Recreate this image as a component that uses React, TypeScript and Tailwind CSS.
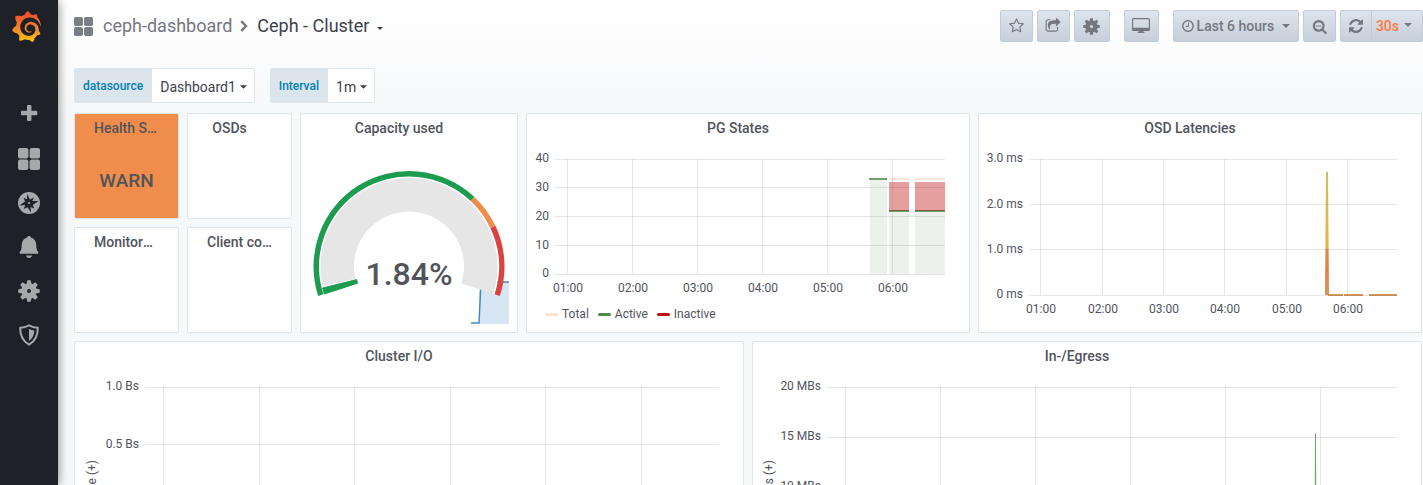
import React from 'react';
import { SiGrafana } from 'react-icons/si';

type IconProps = { className?: string };

/* ---------- icons ---------- */

function AppsIcon({ className }: IconProps) {
  return (
    <svg viewBox="0 0 22 22" className={className} fill="currentColor" aria-hidden="true">
      <rect x="0" y="0" width="10.4" height="10.4" rx="2" />
      <rect x="11.6" y="0" width="10.4" height="10.4" rx="2" />
      <rect x="0" y="11.6" width="10.4" height="10.4" rx="2" />
      <rect x="11.6" y="11.6" width="10.4" height="10.4" rx="2" />
    </svg>
  );
}

function PlusIcon({ className }: IconProps) {
  return (
    <svg viewBox="0 2 22 22" className={className} fill="currentColor" aria-hidden="true">
      <path d="M10 3h2.4a1 1 0 0 1 1 1v4.8h4.9a1 1 0 0 1 1 1v2.4a1 1 0 0 1-1 1h-4.9V18a1 1 0 0 1-1 1H10a1 1 0 0 1-1-1v-4.8H4a1 1 0 0 1-1-1V9.8a1 1 0 0 1 1-1h5V4a1 1 0 0 1 1-1z" />
    </svg>
  );
}

function CompassIcon({ className }: IconProps) {
  return (
    <svg viewBox="0 0 22 22" className={className} aria-hidden="true">
      <circle cx="11" cy="11" r="11" fill="currentColor" />
      <path
        fill="#1f2129"
        d="M9 2l2.900 5.400 4.100-2-1.700 3.700 6.300-.1-5.900 4 1.600 3.600-3.700-1.600.4 5.500-3.400-5.300-4 1.700 1.700-3.900-5.900.4 5.700-4-1.600-3.600 3.500 1.500z"
      />
      <circle cx="11" cy="11" r="1.1" fill="currentColor" />
    </svg>
  );
}

function BellIcon({ className }: IconProps) {
  return (
    <svg viewBox="0 0 22 22" className={className} fill="currentColor" aria-hidden="true">
      <path d="M11 0c1 0 1.700.6 1.900 1.500 3.300.9 5.100 3.500 5.300 7 .2 4 .5 5.800 2 7.600.5.700.1 1.700-.8 1.700H2.600c-.9 0-1.300-1-.8-1.700 1.500-1.800 1.800-3.600 2-7.600.2-3.500 2-6.100 5.300-7C9.300.6 10 0 11 0zM8 19.400h6c-.3 1.500-1.500 2.500-3 2.500s-2.700-1-3-2.500z" />
    </svg>
  );
}

function GearIcon({ className }: IconProps) {
  const teeth = [0, 45, 90, 135, 180, 225, 270, 315];
  return (
    <svg viewBox="0 0 22 22" className={className} fill="currentColor" aria-hidden="true">
      {teeth.map((a) => (
        <path key={a} d="M9.300 0.300h3.400l.9 4.500h-5.200z" transform={`rotate(${a} 11 11)`} />
      ))}
      <path
        fillRule="evenodd"
        d="M11 3.300a7.700 7.700 0 1 0 0 15.400a7.700 7.700 0 1 0 0-15.400zM11 9a2 2 0 1 1 0 4a2 2 0 1 1 0-4z"
      />
    </svg>
  );
}

function ShieldIcon({ className }: IconProps) {
  return (
    <svg viewBox="0 0 22 22" className={className} aria-hidden="true">
      <path
        d="M11 1.300c2.600 1.500 5.500 2.300 8.800 2.400.2 7.800-2.600 13.400-8.800 17-6.200-3.600-9-9.200-8.800-17 3.300-.1 6.200-.9 8.800-2.400z"
        fill="none"
        stroke="currentColor"
        strokeWidth="2"
        strokeLinejoin="round"
      />
      <path d="M11 5c1.700.9 3.500 1.400 5.300 1.600-.1 4.600-1.800 8-5.300 10.400z" fill="currentColor" />
    </svg>
  );
}

function StarIcon({ className }: IconProps) {
  return (
    <svg viewBox="0 0 1664 1792" className={className} fill="currentColor" aria-hidden="true">
      <path d="M1137 1004l306-297-422-62-189-382-189 382-422 62 306 297-73 421 378-199 377 199zm527-357q0 22-26 48l-363 354 86 500q1 7 1 20 0 50-41 50-19 0-40-12l-449-236-449 236q-22 12-40 12-21 0-31.500-14.500t-10.500-35.500q0-6 2-20l86-500-364-354q-25-27-25-48 0-37 56-46l502-73 225-455q19-41 49-41t49 41l225 455 502 73q56 9 56 46z" />
    </svg>
  );
}

function ShareIcon({ className }: IconProps) {
  return (
    <svg viewBox="0 0 1792 1792" className={className} fill="currentColor" aria-hidden="true">
      <path d="M1472 989v259q0 119-84.500 203.500t-203.500 84.500h-832q-119 0-203.500-84.500t-84.500-203.500v-832q0-119 84.500-203.500t203.500-84.500h255q13 0 22.500 9.500t9.500 22.500q0 27-26 32-77 26-133 60-10 4-16 4h-112q-66 0-113 47t-47 113v832q0 66 47 113t113 47h832q66 0 113-47t47-113v-214q0-19 18-29 28-13 54-37 16-16 35-8 21 9 21 29zm237-496l-384 384q-18 19-45 19-12 0-25-5-39-17-39-59v-192h-160q-323 0-438 131-119 137-74 473 3 23-20 34-8 2-12 2-16 0-26-13-10-14-21-31t-39.500-68.500-49.500-99.500-38.500-114-17.500-122q0-49 3.500-91t14-90 28-88 47-81.500 68.500-74 94.500-61.500 124.500-48.500 159.500-30.500 196.500-11h160v-192q0-42 39-59 13-5 25-5 26 0 45 19l384 384q19 19 19 45t-19 45z" />
    </svg>
  );
}

function MonitorIcon({ className }: IconProps) {
  return (
    <svg viewBox="0 0 18 16" className={className} fill="currentColor" aria-hidden="true">
      <path
        fillRule="evenodd"
        d="M1.500 0h15A1.500 1.500 0 0 1 18 1.500v10a1.500 1.500 0 0 1-1.500 1.500h-15A1.500 1.500 0 0 1 0 11.500v-10A1.500 1.500 0 0 1 1.500 0zM1.200 1.200v8.600h15.600V1.200z"
      />
      <path d="M6.500 13h5v1.200h1V15h-7v-.8h1z" />
    </svg>
  );
}

function ClockIcon({ className }: IconProps) {
  return (
    <svg viewBox="0 0 12 12" className={className} fill="none" stroke="currentColor" aria-hidden="true">
      <circle cx="6" cy="6" r="5.200" strokeWidth="1.400" />
      <path d="M6.400 2.800v3.700H3.800" strokeWidth="1" />
    </svg>
  );
}

function ZoomOutIcon({ className }: IconProps) {
  return (
    <svg viewBox="0 0 1728 1792" className={className} fill="currentColor" aria-hidden="true">
      <path d="M1088 800v64q0 13-9.500 22.500t-22.500 9.500h-576q-13 0-22.500-9.500t-9.500-22.500v-64q0-13 9.500-22.500t22.500-9.500h576q13 0 22.500 9.500t9.500 22.500zm128 32q0-185-131.500-316.500t-316.500-131.500-316.500 131.500-131.500 316.500 131.500 316.500 316.500 131.500 316.500-131.500 131.500-316.500zm512 832q0 53-37.500 90.500t-90.500 37.500q-54 0-90-38l-343-342q-179 124-399 124-143 0-273.500-55.500t-225-150-150-225-55.500-273.500 55.500-273.500 150-225 225-150 273.500-55.500 273.500 55.500 225 150 150 225 55.500 273.500q0 220-124 399l343 343q37 37 37 90z" />
    </svg>
  );
}

function RefreshIcon({ className }: IconProps) {
  return (
    <svg viewBox="128 128 1536 1536" className={className} fill="currentColor" aria-hidden="true">
      <path d="M1639 1056q0 5-1 7-64 268-268 434.500t-478 166.500q-146 0-282.500-55t-243.500-157l-129 129q-19 19-45 19t-45-19-19-45v-448q0-26 19-45t45-19h448q26 0 45 19t19 45-19 45l-137 137q71 66 161 102t187 36q134 0 250-65t186-179q11-17 53-117 8-23 30-23h192q13 0 22.500 9.500t9.500 22.500zm25-800v448q0 26-19 45t-45 19h-448q-26 0-45-19t-19-45 19-45l138-138q-148-137-349-137-134 0-250 65t-186 179q-11 17-53 117-8 23-30 23h-199q-13 0-22.500-9.500t-9.500-22.500v-7q65-268 270-434.500t480-166.500q146 0 284 55.500t245 156.500l130-129q19-19 45-19t45 19 19 45z" />
    </svg>
  );
}

function ChevronIcon({ className }: IconProps) {
  return (
    <svg viewBox="0 0 8 12" className={className} fill="none" stroke="currentColor" strokeWidth="2.400" aria-hidden="true">
      <path d="M1.200 1.200L6 6l-4.800 4.800" />
    </svg>
  );
}

function Caret({ className }: IconProps) {
  return (
    <svg viewBox="0 0 8 4" className={className} fill="currentColor" aria-hidden="true">
      <path d="M0 0h8L4 4z" />
    </svg>
  );
}

/* ---------- side menu ---------- */

const NAV = [
  { label: 'Create', Icon: PlusIcon },
  { label: 'Dashboards', Icon: AppsIcon },
  { label: 'Explore', Icon: CompassIcon },
  { label: 'Alerting', Icon: BellIcon },
  { label: 'Configuration', Icon: GearIcon },
  { label: 'Server Admin', Icon: ShieldIcon },
];

function SideMenu() {
  return (
    <nav className="z-10 flex w-[58px] shrink-0 flex-col bg-[#1f2129] shadow-[0_0_10px_rgba(0,0,0,0.5)]">
      <a href="#home" aria-label="Home" className="flex h-[52px] items-center justify-center pr-1.5">
        <svg className="absolute size-0" aria-hidden="true">
          <defs>
            <linearGradient id="flame" x1="0" y1="0" x2="0" y2="1">
              <stop offset="0.1" stopColor="#f1502b" />
              <stop offset="0.6" stopColor="#f48a2f" />
              <stop offset="1" stopColor="#fbca0a" />
            </linearGradient>
          </defs>
        </svg>
        <SiGrafana className="size-[31px]" fill="url(#flame)" />
      </a>
      <ul className="mt-[41px] flex flex-col">
        {NAV.map(({ label, Icon }) => (
          <li key={label}>
            <a
              href={`#${label.toLowerCase().replace(' ', '-')}`}
              aria-label={label}
              className="flex h-11 items-center justify-center text-[#a6a8ab]"
            >
              <Icon className="size-[22px]" />
            </a>
          </li>
        ))}
      </ul>
    </nav>
  );
}

/* ---------- top bar ---------- */

const BTN =
  'flex h-8 items-center justify-center rounded-xs border border-[#c3cdd9] bg-linear-to-b from-[#dde4ed] to-[#c6cfda] text-[#75777f]';

function TopBar() {
  return (
    <header className="flex h-[52px] items-center justify-between">
      <div className="flex items-center text-lg">
        <AppsIcon className="size-[19px] text-[#7b7d85]" />
        <a href="#ceph-dashboard" className="ml-2.5 text-[#75777f]">
          ceph-dashboard
        </a>
        <ChevronIcon className="mr-[9px] ml-2 h-3 w-2 text-[#75777f]" />
        <button type="button" className="flex items-center text-[#3f4149]">
          Ceph - Cluster
          <Caret className="mt-1 ml-2 h-[3px] w-1.5" />
        </button>
      </div>
      <div className="flex items-center gap-3.5 text-sm font-medium">
        <div className="flex gap-1">
          <button type="button" aria-label="Mark as favorite" className={`${BTN} w-[33px]`}>
            <StarIcon className="h-4 w-[15px]" />
          </button>
          <button type="button" aria-label="Share dashboard" className={`${BTN} w-[33px]`}>
            <ShareIcon className="size-4" />
          </button>
          <button type="button" aria-label="Dashboard settings" className={`${BTN} w-9`}>
            <GearIcon className="size-[17px]" />
          </button>
        </div>
        <button type="button" aria-label="Cycle view mode" className={`${BTN} w-[35px]`}>
          <MonitorIcon className="h-4 w-[18px]" />
        </button>
        <div className="flex gap-1">
          <button type="button" className={`${BTN} w-[126px]`}>
            <ClockIcon className="mr-[3px] size-3" />
            Last 6 hours
            <Caret className="ml-2 h-1 w-2" />
          </button>
          <button type="button" aria-label="Zoom out" className={`${BTN} w-[33px]`}>
            <ZoomOutIcon className="size-[15px]" />
          </button>
          <div className="flex">
            <button type="button" aria-label="Refresh" className={`${BTN} w-8 rounded-r-none`}>
              <RefreshIcon className="size-3.5" />
            </button>
            <div className={`${BTN} rounded-l-none border-l-0 pr-2.5 pl-1`}>
              <select
                aria-label="Refresh interval"
                defaultValue="30s"
                className="field-sizing-content appearance-none bg-transparent text-[#ff7941]"
              >
                <option>30s</option>
              </select>
              <Caret className="mb-0.5 ml-[5px] h-1 w-2" />
            </div>
          </div>
        </div>
      </div>
    </header>
  );
}

function Variable({ id, label, value }: { id: string; label: string; value: string }) {
  return (
    <div className="flex h-[35px] rounded-xs border border-[#dce4ec] bg-white">
      <label htmlFor={id} className="flex items-center bg-[#dce4ec] pr-[9px] pl-2 text-xs font-medium text-[#0083b3]">
        {label}
      </label>
      <div className="flex items-center pt-0.5 pr-[7px] pl-2 text-[#3f4149]">
        <select id={id} defaultValue={value} className="field-sizing-content appearance-none bg-transparent text-sm">
          <option>{value}</option>
        </select>
        <Caret className="ml-1 h-1 w-[7px]" />
      </div>
    </div>
  );
}

/* ---------- panels ---------- */

type PanelProps = { title: string; className: string; tone?: string; children?: React.ReactNode };

/* The title keeps room on its right for the menu caret, and gives that room up when it is too long. */
function Panel({ title, className, tone = 'bg-white', children }: PanelProps) {
  return (
    <section className={`flex min-w-0 flex-col rounded-xs border border-[#dce4ec] ${tone} ${className}`}>
      <header className="flex justify-center px-[19px]">
        <h2 className="max-w-full shrink-0 truncate text-sm leading-7 font-medium text-[#52545c]">{title}</h2>
        <span className="w-5" />
      </header>
      {children}
    </section>
  );
}

type Tick = { at: number; label?: string };

type ChartProps = {
  name: string;
  width: number;
  height: number;
  left: number;
  right: number;
  yTicks: Tick[];
  xTicks: Tick[];
  axis?: { x: number; text: string };
  children?: React.ReactNode;
};

/* Grid lines and tick labels in the chart's own units; the series are drawn beneath the grid. */
function Chart({ name, width, height, left, right, yTicks, xTicks, axis, children }: ChartProps) {
  const top = yTicks[0].at;
  const bottom = yTicks[yTicks.length - 1].at;
  const step = (bottom - top) / (yTicks.length - 1);
  return (
    <svg viewBox={`0 0 ${width} ${height}`} className="w-full text-xs" role="img" aria-label={name}>
      {children}
      <g fill="#545454" fillOpacity="0.15">
        {yTicks.map((t) => (
          <rect key={t.at} x={left} y={t.at} width={right - left} height="1" />
        ))}
        {xTicks.map((t) => (
          <rect key={t.at} x={t.at} y={top} width="1" height={bottom - top} />
        ))}
      </g>
      <g fill="#52545c">
        {yTicks.map((t, i) => (
          <text key={t.at} x={left - 6} y={Math.ceil(top + step * i) + 3} textAnchor="end">
            {t.label}
          </text>
        ))}
        {xTicks.map((t) => (
          <text key={t.at} x={t.at + 1} y={bottom + 18} textAnchor="middle">
            {t.label}
          </text>
        ))}
        {axis && (
          <text textAnchor="end" transform={`translate(${axis.x} 90) rotate(-90)`}>
            {axis.text}
          </text>
        )}
      </g>
    </svg>
  );
}

const HOURS = ['01:00', '02:00', '03:00', '04:00', '05:00', '06:00'];
const hours = (xs: number[]): Tick[] => xs.map((at, i) => ({ at, label: HOURS[i] }));

function PgStates() {
  return (
    <Chart
      name="Placement group states over time"
      width={442}
      height={158}
      left={28}
      right={418}
      yTicks={[
        { at: 17, label: '40' },
        { at: 45, label: '30' },
        { at: 74, label: '20' },
        { at: 103, label: '10' },
        { at: 132, label: '0' },
      ]}
      xTicks={hours([40, 105, 170, 235, 300, 365])}
    >
      <g fill="#508948" fillOpacity="0.11">
        <rect x="343" y="37" width="17" height="95" />
        <rect x="362" y="69" width="20" height="63" />
        <rect x="388" y="69" width="30" height="63" />
      </g>
      <g fill="#c00e0e" fillOpacity="0.4">
        <rect x="362" y="40" width="20" height="28" />
        <rect x="388" y="40" width="30" height="28" />
      </g>
      <g fill="#fbe5d8">
        <rect x="362" y="36" width="20" height="2" />
        <rect x="388" y="36" width="30" height="2" />
      </g>
      <g fill="#6fa067">
        <rect x="342" y="36" width="18" height="2" />
        <rect x="362" y="68" width="20" height="2" />
        <rect x="388" y="68" width="30" height="2" />
      </g>
      <g fill="#7c5a40">
        <rect x="362" y="68" width="20" height="1" />
        <rect x="388" y="68" width="30" height="1" />
      </g>
    </Chart>
  );
}

const LEGEND = [
  { label: 'Total', swatch: 'bg-[#f9e2d2]' },
  { label: 'Active', swatch: 'bg-[#508948]' },
  { label: 'Inactive', swatch: 'bg-[#c00e0e]' },
];

function Legend() {
  return (
    <ul className="flex gap-[9px] px-[18px] pt-1.5 text-xs text-[#52545c]">
      {LEGEND.map(({ label, swatch }) => (
        <li key={label} className="flex items-center gap-1">
          <span className={`h-[3px] w-[13px] rounded-xs ${swatch}`} />
          {label}
        </li>
      ))}
    </ul>
  );
}

function OsdLatencies() {
  return (
    <Chart
      name="OSD latencies over time"
      width={442}
      height={180}
      left={50}
      right={418}
      yTicks={[
        { at: 17, label: '3.0 ms' },
        { at: 62, label: '2.0 ms' },
        { at: 107, label: '1.0 ms' },
        { at: 153, label: '0 ms' },
      ]}
      xTicks={hours([61, 123, 184, 245, 307, 368])}
    >
      <defs>
        <linearGradient id="spike" x1="0" y1="0" x2="0" y2="1">
          <stop offset="0" stopColor="#d3bd60" />
          <stop offset="0.62" stopColor="#e5b545" />
          <stop offset="0.63" stopColor="#d98a50" />
          <stop offset="0.82" stopColor="#ea7d4a" />
          <stop offset="1" stopColor="#cf9a5c" />
        </linearGradient>
      </defs>
      <path d="M347 30h2l1 123h-4z" fill="url(#spike)" />
      <g fill="#d59658">
        <rect x="349" y="152" width="15" height="2" />
        <rect x="365" y="152" width="19" height="2" />
        <rect x="390" y="152" width="28" height="2" />
      </g>
    </Chart>
  );
}

function ClusterIo() {
  return (
    <Chart
      name="Cluster I/O over time"
      width={668}
      height={180}
      left={70}
      right={644}
      yTicks={[{ at: 17, label: '1.0 Bs' }, { at: 74, label: '0.5 Bs' }, { at: 132, label: '0 Bs' }]}
      xTicks={[88, 184, 279, 375, 470, 566].map((at) => ({ at }))}
      axis={{ x: 21, text: 'Write (+)' }}
    />
  );
}

function Egress() {
  return (
    <Chart
      name="Ingress and egress over time"
      width={668}
      height={180}
      left={74}
      right={644}
      yTicks={[
        { at: 17, label: '20 MBs' },
        { at: 67, label: '15 MBs' },
        { at: 117, label: '10 MBs' },
        { at: 167, label: '5 MBs' },
      ]}
      xTicks={[92, 187, 282, 377, 472, 567].map((at) => ({ at }))}
      axis={{ x: 20, text: 'Ingress (+)' }}
    >
      <path d="M562 63h1l1.500 104h-4z" fill="#7eb26d" fillOpacity="0.3" />
      <rect x="562" y="63" width="1" height="104" fill="#6fa86c" />
    </Chart>
  );
}

/* ---------- gauge ---------- */

const CX = 108;
const CY = 124.5;
const START = 198;
const SWEEP = 216;

function point(r: number, pct: number) {
  const a = ((START - (SWEEP * pct) / 100) * Math.PI) / 180;
  return `${(CX + r * Math.cos(a)).toFixed(2)} ${(CY - r * Math.sin(a)).toFixed(2)}`;
}

function band(inner: number, outer: number, from: number, to: number) {
  const large = ((to - from) * SWEEP) / 100 > 180 ? 1 : 0;
  return `M${point(outer, from)}A${outer} ${outer} 0 ${large} 1 ${point(outer, to)}L${point(inner, to)}A${inner} ${inner} 0 ${large} 0 ${point(inner, from)}Z`;
}

function Gauge() {
  return (
    <svg viewBox="0 0 216 190" className="w-full" role="img" aria-label="Capacity used: 1.84%">
      <path d="M178 181V150L180 140H208V182H178z" fill="#d8e6f3" />
      <path d="M170 181h8l2-41h28" fill="none" stroke="#3d8ac7" strokeWidth="1.500" />
      <path d={band(88, 90, 0, 100)} fill="#fff" />
      <path d={band(55, 88.5, 0, 100)} fill="#e6e6e6" />
      <path d={band(54, 89, -0.5, 2.4)} fill="#fff" />
      <path d={band(54, 89, 0, 1.84)} fill="#1d9c50" stroke="#1d9c50" />
      <path d={band(90, 95.5, 0, 70)} fill="#1d9c50" />
      <path d={band(90, 95.5, 70, 80)} fill="#f08c4c" />
      <path d={band(90, 95.5, 80, 100)} fill="#d9443f" />
      <text x="108" y="143" textAnchor="middle" fill="#52545c" className="text-[32px] font-medium">
        1.84%
      </text>
    </svg>
  );
}

export default function App() {
  return (
    <div className="flex h-screen overflow-hidden bg-[#f7f8fa] font-['Roboto',sans-serif]">
      <SideMenu />
      <main className="min-w-0 flex-1 bg-[linear-gradient(to_bottom,#ffffff,#f7f8fa_115px)] pl-4">
        <TopBar />
        <div className="mt-4 mb-2.5 flex gap-[15px]">
          <Variable id="datasource" label="datasource" value="Dashboard1" />
          <Variable id="interval" label="Interval" value="1m" />
        </div>
        <div className="grid grid-cols-24 gap-2 pr-px">
          <div className="col-span-4 grid grid-cols-2 grid-rows-2 gap-2">
            <Panel title="Health Status" className="h-[106px]" tone="bg-[#f08c4c]">
              <p className="flex flex-1 items-center justify-center pt-0.5 text-[19px] font-medium text-[#52545c]">WARN</p>
            </Panel>
            <Panel title="OSDs" className="h-[106px]" />
            <Panel title="Monitors in quorum" className="h-[106px]" />
            <Panel title="Client connections" className="h-[106px]" />
          </div>
          <Panel title="Capacity used" className="col-span-4">
            <Gauge />
          </Panel>
          <Panel title="PG States" className="col-span-8">
            <PgStates />
            <Legend />
          </Panel>
          <Panel title="OSD Latencies" className="col-span-8">
            <OsdLatencies />
          </Panel>
          <Panel title="Cluster I/O" className="col-span-12">
            <ClusterIo />
          </Panel>
          <Panel title="In-/Egress" className="col-span-12">
            <Egress />
          </Panel>
        </div>
      </main>
    </div>
  );
}
